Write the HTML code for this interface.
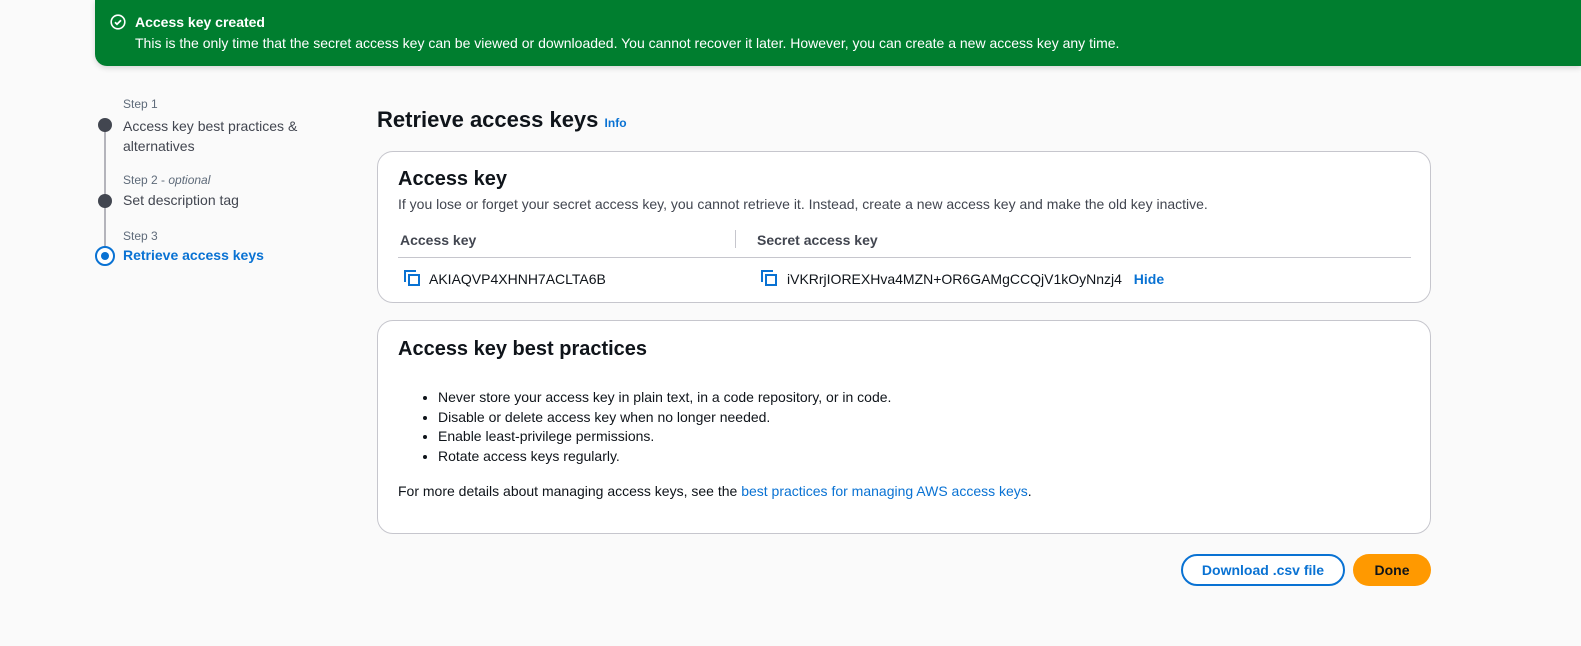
<!DOCTYPE html>
<html><head><style>
*{box-sizing:border-box;margin:0;padding:0}
body{width:1581px;height:646px;background:#fafafa;font-family:"Liberation Sans",Arial,sans-serif;color:#0f141a;position:relative;overflow:hidden;font-size:14px}
.ban{position:absolute;left:95px;top:0;width:1486px;height:66px;background:#007e2f;border-radius:0 0 0 12px;box-shadow:0 2px 6px rgba(0,0,0,.15);color:#fff}
.ban .t{position:absolute;left:40px;top:14px;font-weight:bold;font-size:14px}
.ban .d{position:absolute;left:40px;top:35px;font-size:14px}
.ab{position:absolute;white-space:nowrap}
.sl{font-size:12px;color:#5f6b7a}
.dot{position:absolute;width:14px;height:14px;border-radius:50%;background:#424650}
.card{position:absolute;left:377px;width:1054px;background:#fff;border:1px solid #c6c6cd;border-radius:16px}
.blue{color:#0972d3}
ul{list-style:disc}
.btn{position:absolute;top:554px;height:32px;border-radius:16px;font-weight:bold;font-size:14px;text-align:center;line-height:28px}
</style></head><body>
<div class="ban">
<svg class="ab" style="left:15px;top:14px" width="16" height="16" viewBox="0 0 16 16"><circle cx="8" cy="8" r="6.8" fill="none" stroke="#fff" stroke-width="1.6"/><path d="M5 8.2l2 2 4-4" fill="none" stroke="#fff" stroke-width="1.8"/></svg>
<div class="t">Access key created</div>
<div class="d">This is the only time that the secret access key can be viewed or downloaded. You cannot recover it later. However, you can create a new access key any time.</div>
</div>
<div class="ab" style="left:104px;top:131px;width:2px;height:118px;background:#b4b4bb"></div>
<div class="dot" style="left:98px;top:118px"></div>
<div class="dot" style="left:98px;top:194px"></div>
<div class="ab" style="left:95px;top:246px;width:20px;height:20px;border-radius:50%;border:2.5px solid #0972d3;background:#fff"><div style="position:absolute;left:3.5px;top:3.5px;width:8px;height:8px;border-radius:50%;background:#0972d3"></div></div>
<div class="ab sl" style="left:123px;top:97px">Step 1</div>
<div class="ab" style="left:123px;top:116px;line-height:20px;color:#424650">Access key best practices &amp;<br>alternatives</div>
<div class="ab sl" style="left:123px;top:173px">Step 2 - <i>optional</i></div>
<div class="ab" style="left:123px;top:192px;color:#424650">Set description tag</div>
<div class="ab sl" style="left:123px;top:229px">Step 3</div>
<div class="ab blue" style="left:123px;top:247px;font-weight:bold">Retrieve access keys</div>
<div class="ab" style="left:377px;top:107px;font-size:22px;font-weight:bold">Retrieve access keys <span class="blue" style="font-size:12px">Info</span></div>
<div class="card" style="top:151px;height:152px">
<div class="ab" style="left:20px;top:16px;font-size:20px;font-weight:bold">Access key</div>
<div class="ab" style="left:20px;top:44px;color:#424650">If you lose or forget your secret access key, you cannot retrieve it. Instead, create a new access key and make the old key inactive.</div>
<div class="ab" style="left:22px;top:80px;font-weight:bold;color:#424650">Access key</div>
<div class="ab" style="left:357px;top:78px;width:1px;height:18px;background:#c6c6cd"></div>
<div class="ab" style="left:379px;top:80px;font-weight:bold;color:#424650">Secret access key</div>
<div class="ab" style="left:20px;top:105px;width:1013px;height:1px;background:#c6c6cd"></div>
<svg class="ab" style="left:26px;top:118px" width="16" height="16" viewBox="0 0 16 16" fill="none" stroke="#0972d3" stroke-width="2"><path d="M1 12V1h11"/><rect x="5" y="5" width="10" height="10"/></svg>
<div class="ab" style="left:51px;top:119px">AKIAQVP4XHNH7ACLTA6B</div>
<svg class="ab" style="left:383px;top:118px" width="16" height="16" viewBox="0 0 16 16" fill="none" stroke="#0972d3" stroke-width="2"><path d="M1 12V1h11"/><rect x="5" y="5" width="10" height="10"/></svg>
<div class="ab" style="left:409px;top:119px">iVKRrjIOREXHva4MZN+OR6GAMgCCQjV1kOyNnzj4 <b class="blue" style="margin-left:8px">Hide</b></div>
</div>
<div class="card" style="top:320px;height:214px">
<div class="ab" style="left:20px;top:17px;font-size:20px;font-weight:bold">Access key best practices</div>
<ul class="ab" style="left:60px;top:67px;line-height:19.5px">
<li>Never store your access key in plain text, in a code repository, or in code.</li>
<li>Disable or delete access key when no longer needed.</li>
<li>Enable least-privilege permissions.</li>
<li>Rotate access keys regularly.</li></ul>
<div class="ab" style="left:20px;top:162px">For more details about managing access keys, see the <span class="blue">best practices for managing AWS access keys</span>.</div>
</div>
<div class="btn" style="left:1181px;width:164px;border:2px solid #0972d3;color:#0972d3;background:#fff">Download .csv file</div>
<div class="btn" style="left:1353px;width:78px;background:#ff9900;color:#0f141a;line-height:32px">Done</div>
</body></html>
